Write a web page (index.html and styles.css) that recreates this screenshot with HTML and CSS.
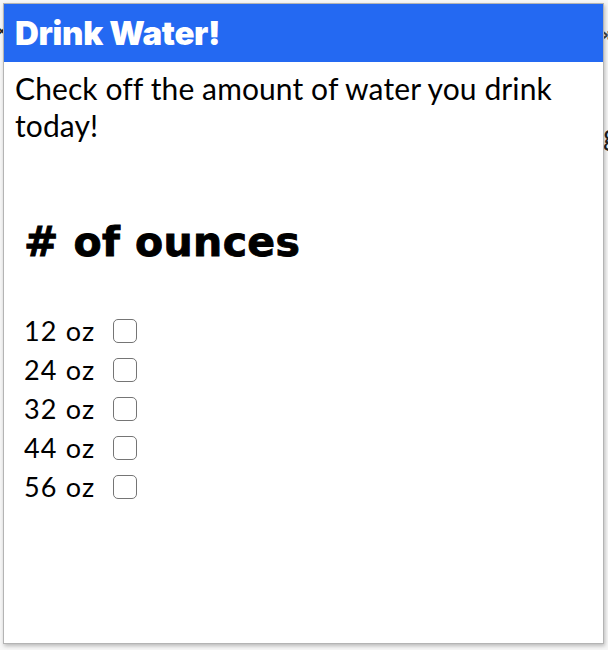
FILE: index.html
```html
<!DOCTYPE html>
<html>
<head>
<meta charset="utf-8">
<link rel="stylesheet" href="styles.css">
</head>
<body>
<span class="bg-x">✕</span>
<span class="bg-chev">»</span>
<span class="bg-g">g</span>
<div class="popup">
  <header class="bar"><h1 class="title">Drink Water!</h1></header>
  <p class="intro">Check off the amount of water you drink today!</p>
  <section class="tracker">
    <h2 class="heading"># of ounces</h2>
    <ul class="list">
      <li class="row"><span class="label">12 oz</span><span class="box"></span></li>
      <li class="row"><span class="label">24 oz</span><span class="box"></span></li>
      <li class="row"><span class="label">32 oz</span><span class="box"></span></li>
      <li class="row"><span class="label">44 oz</span><span class="box"></span></li>
      <li class="row"><span class="label">56 oz</span><span class="box"></span></li>
    </ul>
  </section>
</div>
</body>
</html>
```
FILE: styles.css
```css
html, body { margin: 0; padding: 0; }
body {
  background: #f7f7f7;
  width: 608px;
  height: 650px;
  overflow: hidden;
  position: relative;
  padding: 3px 0 0 3px;
  box-sizing: border-box;
}
.bg-x { position: absolute; left: -5px; top: 22px; font: 16px "DejaVu Sans", sans-serif; color: #222; }
.bg-chev { position: absolute; left: 601px; top: 22px; font: bold 20px "DejaVu Sans", sans-serif; color: #444; }
.bg-g { position: absolute; left: 603px; top: 116px; font: 30px "Lato", sans-serif; color: #222; }
.popup {
  position: relative;
  width: 601px;
  height: 641px;
  background: #fff;
  border: 1px solid #b4b4b4;
  box-shadow: 1px 2px 4px rgba(0,0,0,0.25);
  box-sizing: border-box;
}
.bar {
  background: #2469f2;
  height: 58px;
  display: flex;
  align-items: center;
  padding-left: 11px;
}
.title {
  margin: 0;
  color: #fff;
  font: 900 33px "Inter", "Liberation Sans", sans-serif;
  letter-spacing: -0.3px;
}
.intro {
  margin: 8px 0 0 11px;
  font: 30px/37px "Lato", sans-serif;
  letter-spacing: 0.1px;
  color: #000;
}
.tracker { padding-left: 20px; }
.heading {
  margin: 74px 0 0 0;
  font: bold 41px "DejaVu Sans", sans-serif;
  letter-spacing: 0.4px;
  -webkit-text-stroke: 0.9px #000;
  color: #000;
}
.list { list-style: none; margin: 45px 0 0 0; padding: 0; }
.row { display: flex; align-items: center; height: 39px; }
.label { font: 27px "Lato", sans-serif; letter-spacing: 1.2px; color: #000; margin-right: 18px; }
.box {
  width: 24px;
  height: 24px;
  border: 1.5px solid #757575;
  border-radius: 5px;
  box-sizing: border-box;
}
```
